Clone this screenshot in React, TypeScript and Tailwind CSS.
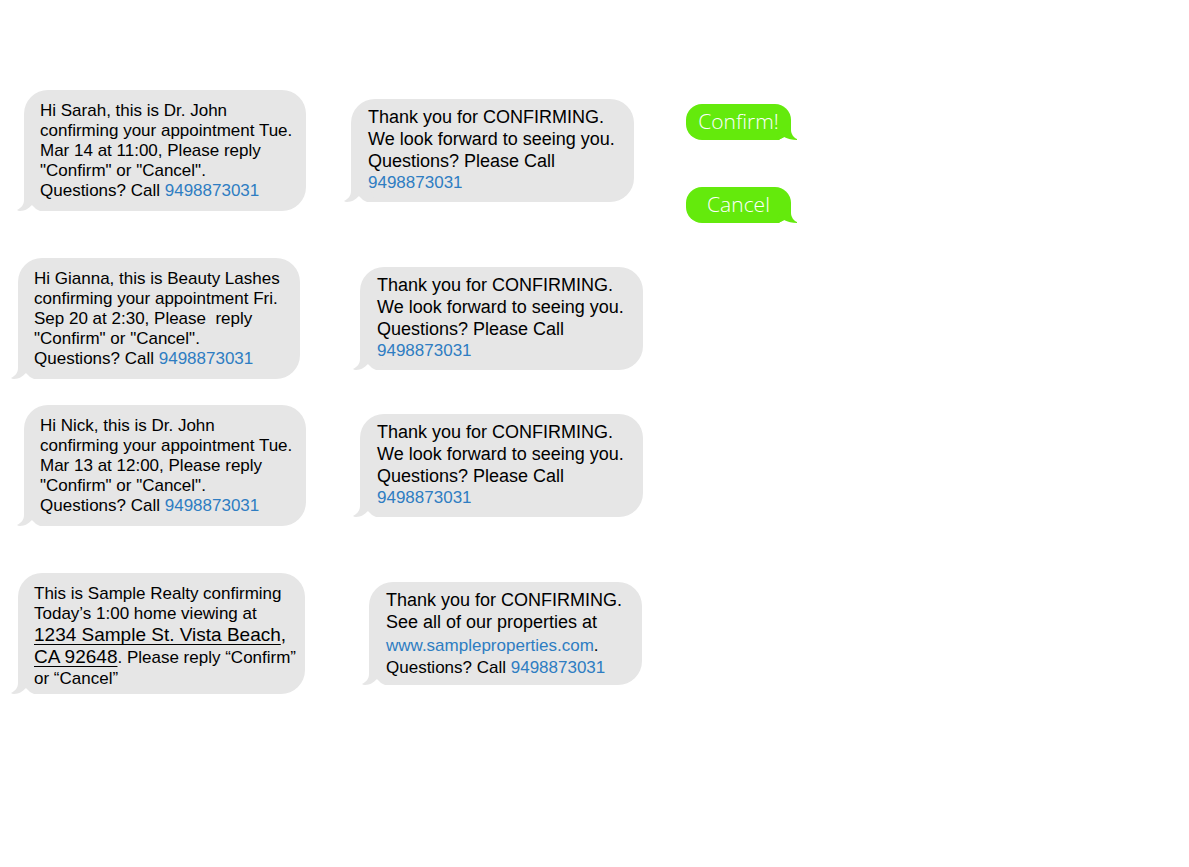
import type { ReactNode } from "react";

function ReceivedBubble({ className, children }: { className: string; children: ReactNode }) {
  return (
    <div
      className={`relative shrink-0 rounded-[24px] bg-[#e6e6e6] text-[17px] leading-[20px] whitespace-pre text-black ${className}`}
    >
      <svg
        className="absolute bottom-0 -left-2 h-6 w-8"
        viewBox="0 0 32 24"
        fill="#e6e6e6"
        aria-hidden="true"
      >
        <path d="M8 0V13C8 18 5 21 1 23Q2 24 4 24C9 24 13 21 16 18Q19 22 24 24H32L24 4Z" />
      </svg>
      <div className="relative">{children}</div>
    </div>
  );
}

function SentBubble({ children }: { children: ReactNode }) {
  return (
    <div className="relative flex h-9 w-[105px] items-center justify-center rounded-2xl bg-[#64ea0c] font-['Open_Sans','Noto_Sans',sans-serif] text-[21px] leading-[24px] font-light text-white">
      <svg
        className="absolute -right-2 bottom-0 h-4 w-6"
        viewBox="0 0 24 16"
        fill="#64ea0c"
        aria-hidden="true"
      >
        <path d="M16 0V6C16 10 19 14 22 15V16C17 16 13 15 9 13Q6 14 4 16H0L6 4Z" />
      </svg>
      <p className="relative pb-0.5">{children}</p>
    </div>
  );
}

function Phone() {
  return (
    <a href="tel:9498873031" className="text-[#2e7dc2]">
      9498873031
    </a>
  );
}

function Reminder({ lines }: { lines: string[] }) {
  return (
    <ReceivedBubble className="min-h-[121px] w-[282px] pt-[11px] pl-4">
      {lines.map((line) => (
        <p key={line}>{line}</p>
      ))}
      <p>"Confirm" or "Cancel".</p>
      <p>
        Questions? Call <Phone />
      </p>
    </ReceivedBubble>
  );
}

function ThankYou() {
  return (
    <ReceivedBubble className="min-h-[103px] w-[283px] pt-[7px] pl-[17px]">
      <div className="text-[18px] leading-[22px]">
        <p>Thank you for CONFIRMING.</p>
        <p>We look forward to seeing you.</p>
        <p>Questions? Please Call</p>
      </div>
      <p className="leading-[22px]">
        <Phone />
      </p>
    </ReceivedBubble>
  );
}

export default function App() {
  return (
    <main className="flex min-h-screen items-start gap-[43px] bg-white pt-[90px] font-['Liberation_Sans',Arial,sans-serif]">
      <div className="flex shrink-0 flex-col gap-[26px]">
        <section className="flex flex-col gap-[47px]">
          <div className="flex items-center gap-[45px] pl-6">
            <Reminder
              lines={[
                "Hi Sarah, this is Dr. John",
                "confirming your appointment Tue.",
                "Mar 14 at 11:00, Please reply",
              ]}
            />
            <ThankYou />
          </div>
          <div className="flex items-center gap-[60px] pl-[18px]">
            <Reminder
              lines={[
                "Hi Gianna, this is Beauty Lashes",
                "confirming your appointment Fri.",
                "Sep 20 at 2:30, Please  reply",
              ]}
            />
            <ThankYou />
          </div>
        </section>
        <section className="flex flex-col gap-[47px]">
          <div className="flex items-center gap-[54px] pl-6">
            <Reminder
              lines={[
                "Hi Nick, this is Dr. John",
                "confirming your appointment Tue.",
                "Mar 13 at 12:00, Please reply",
              ]}
            />
            <ThankYou />
          </div>
          <div className="flex items-center gap-[64px] pl-[18px]">
            <ReceivedBubble className="min-h-[121px] w-[287px] pt-[11px] pl-4">
              <p>This is Sample Realty confirming</p>
              <p>Today’s 1:00 home viewing at</p>
              <p className="text-[19px] leading-[22px]">
                <span className="underline decoration-1 underline-offset-3 [text-decoration-skip-ink:none]">
                  1234 Sample St. Vista Beach
                </span>
                ,
              </p>
              <p className="leading-[22px]">
                <span className="text-[19px] underline decoration-1 underline-offset-3 [text-decoration-skip-ink:none]">
                  CA 92648
                </span>
                . Please reply “Confirm”
              </p>
              <p>or “Cancel”</p>
            </ReceivedBubble>
            <ReceivedBubble className="min-h-[103px] w-[273px] pt-[7px] pl-[17px]">
              <div className="text-[18px] leading-[22px]">
                <p>Thank you for CONFIRMING.</p>
                <p>See all of our properties at</p>
              </div>
              <div className="pt-0.5 leading-[22px]">
                <p>
                  <a href="#properties" className="text-[#2e7dc2]">
                    www.sampleproperties.com
                  </a>
                  .
                </p>
                <p>
                  Questions? Call <Phone />
                </p>
              </div>
            </ReceivedBubble>
          </div>
        </section>
      </div>
      <div className="flex flex-col gap-[47px] pt-[14px]">
        <SentBubble>Confirm!</SentBubble>
        <SentBubble>Cancel</SentBubble>
      </div>
    </main>
  );
}
